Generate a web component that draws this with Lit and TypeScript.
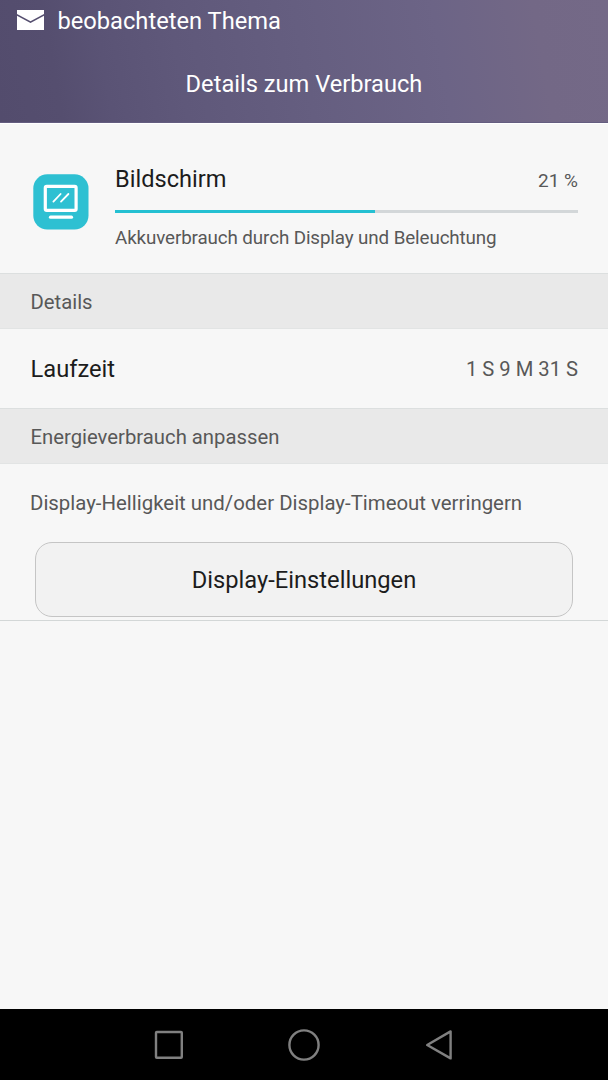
import { LitElement, html, css } from "lit";
import { customElement, property } from "lit/decorators.js";

@customElement("section-header")
class SectionHeader extends LitElement {
  @property() label = "";

  static styles = css`
    :host {
      display: flex;
      align-items: center;
      box-sizing: border-box;
      height: 56px;
      padding: 3px 30.5px 0;
      background: #e9e9e9;
      border-top: 1px solid #dcdfdf;
      border-bottom: 1px solid #e2e4e4;
      color: #585858;
      font-size: 20.3px;
    }
  `;

  render() {
    return html`<span>${this.label}</span>`;
  }
}

@customElement("nav-bar")
class NavBar extends LitElement {
  static styles = css`
    :host {
      display: flex;
      justify-content: center;
      align-items: center;
      gap: 99px;
      box-sizing: border-box;
      height: 71px;
      background: #000;
    }
    svg {
      display: block;
      width: 36px;
      height: 36px;
      fill: none;
      stroke: #808080;
      stroke-width: 2.4;
      stroke-linejoin: round;
    }
  `;

  render() {
    return html`
      <svg viewBox="0 0 36 36"><rect x="5" y="5" width="25.8" height="25.8" rx="0.8" /></svg>
      <svg viewBox="0 0 36 36"><circle cx="18" cy="18" r="14.6" /></svg>
      <svg viewBox="0 0 36 36"><path d="M29.6 4.4V31.4L6.2 18Z" /></svg>
    `;
  }
}

@customElement("app-root")
class AppRoot extends LitElement {
  @property({ type: Number }) fill = 56.2;

  static styles = css`
    :host {
      display: flex;
      flex-direction: column;
      width: 100%;
      height: 100vh;
      overflow: hidden;
      background: #f7f7f7;
      color: #1c1c1c;
      font-family: Roboto, "Noto Sans", sans-serif;
      line-height: 1.2;
      white-space: nowrap;
    }
    header {
      height: 123px;
      box-sizing: border-box;
      background: linear-gradient(80deg, #534c6d 0%, #554e6f 10%, #5a5375 18%, #5f587a 30%, #655e80 50%, #6c6486 72%, #736886 88%, #746987 100%);
      border-bottom: 1px solid #645d80;
      color: #fff;
    }
    .status {
      display: flex;
      align-items: center;
      height: 40px;
      padding-left: 17px;
      gap: 13.4px;
      font-size: 23.7px;
    }
    .status span {
      padding-top: 2px;
    }
    .mail {
      display: block;
      width: 27px;
      height: 20px;
    }
    .title {
      display: flex;
      align-items: center;
      justify-content: center;
      height: 85px;
      padding-top: 2px;
      font-size: 23.65px;
    }
    .usage {
      display: flex;
      height: 150px;
      box-sizing: border-box;
      padding: 41px 30px 0 33px;
      border-top: 1px solid #fff;
    }
    .app-icon {
      display: block;
      width: 56px;
      height: 56px;
      margin: 9px 26px 0 0;
    }
    .info {
      flex: 1;
    }
    .row {
      display: flex;
      justify-content: space-between;
      align-items: center;
    }
    .name {
      font-size: 23.6px;
      padding-bottom: 1px;
    }
    .percent {
      color: #585858;
      font-size: 19px;
      padding-top: 4px;
    }
    .track {
      height: 3px;
      margin-top: 16px;
      background: #d3d7d9;
    }
    .bar {
      height: 3px;
      background: #25c0d2;
    }
    .desc {
      margin-top: 14px;
      color: #585858;
      font-size: 18.8px;
      letter-spacing: -0.11px;
    }
    .runtime {
      height: 79px;
      box-sizing: border-box;
      padding: 2px 30px 0 30.5px;
      font-size: 23.7px;
    }
    .value {
      color: #585858;
      font-size: 20.2px;
    }
    .adjust {
      box-sizing: border-box;
      height: 157px;
      padding: 27px 35px 0 30px;
      border-bottom: 1px solid #d3d7d7;
    }
    .hint {
      color: #585858;
      font-size: 20.4px;
      line-height: 24px;
    }
    button {
      display: block;
      box-sizing: border-box;
      width: 538px;
      height: 75px;
      margin: 27px 0 0 5px;
      padding: 1px 0 0;
      border: 1px solid #c5c5c5;
      border-radius: 17px;
      background: #f2f2f2;
      color: #1c1c1c;
      font-family: inherit;
      font-size: 23.7px;
    }
    .space {
      flex: 1;
    }
  `;

  render() {
    return html`
      <header>
        <div class="status">
          <svg class="mail" viewBox="0 0 27 20">
            <path fill="#fff" d="M0 0H27V4L13.5 11.2L0 4Z" />
            <path fill="#fff" d="M0 5.8L13.5 13L27 5.8V20H0Z" />
          </svg>
          <span>beobachteten Thema</span>
        </div>
        <div class="title">Details zum Verbrauch</div>
      </header>
      <section class="usage">
        <svg class="app-icon" viewBox="0 0 56 56" fill="none" stroke="#fff" stroke-linecap="round">
          <rect x="0.3" y="0.3" width="55.2" height="55.2" rx="14" fill="#2ec0d2" stroke="none" />
          <rect x="12.3" y="12.3" width="30.8" height="24" rx="1.4" stroke-width="3.2" />
          <path d="M17.5 43.2H38.5" stroke-width="3.2" />
          <path d="M20.4 27.6L27.6 20M28 27.6L35.4 20" stroke-width="1.8" />
        </svg>
        <div class="info">
          <div class="row">
            <span class="name">Bildschirm</span>
            <span class="percent">21 %</span>
          </div>
          <div class="track"><div class="bar" style="width:${this.fill}%"></div></div>
          <div class="desc">Akkuverbrauch durch Display und Beleuchtung</div>
        </div>
      </section>
      <section-header label="Details"></section-header>
      <div class="row runtime">
        <span>Laufzeit</span>
        <span class="value">1 S 9 M 31 S</span>
      </div>
      <section-header label="Energieverbrauch anpassen"></section-header>
      <section class="adjust">
        <div class="hint">Display-Helligkeit und/oder Display-Timeout verringern</div>
        <button>Display-Einstellungen</button>
      </section>
      <div class="space"></div>
      <nav-bar></nav-bar>
    `;
  }
}
